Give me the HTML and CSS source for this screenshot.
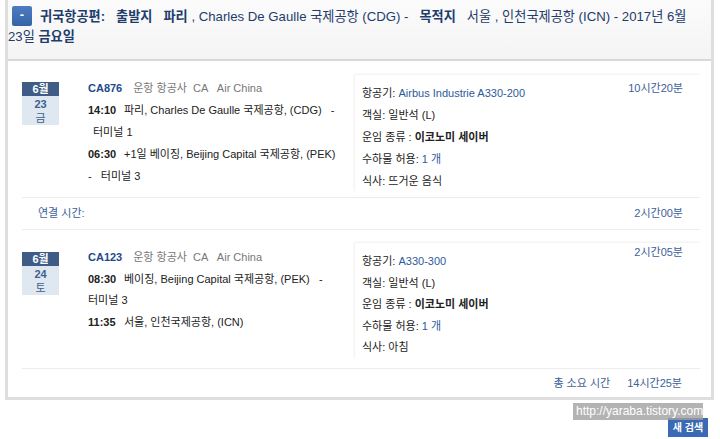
FILE: index.html
```html
<!DOCTYPE html>
<html lang="ko">
<head>
<meta charset="utf-8">
<link rel="stylesheet" href="styles.css">
</head>
<body>
<div class="panel">
  <div class="head">
    <div class="hline"><span class="toggle">-</span><b>귀국항공편:</b>&nbsp;&nbsp; <b>출발지</b>&nbsp;&nbsp; <b>파리</b> , Charles De Gaulle 국제공항 (CDG) -&nbsp;&nbsp; <b>목적지</b>&nbsp;&nbsp; 서울 , 인천국제공항 (ICN) - 2017년 6월</div>
    <div class="hline">23일 <b>금요일</b></div>
  </div>
  <div class="body">
    <div class="segment">
      <div class="left">
        <div class="date"><div class="mon">6월</div><div class="dnum">23</div><div class="dw">금</div></div>
        <div class="flight">
          <div class="row"><span class="code">CA876</span><span class="carrier">운항 항공사&nbsp; CA&nbsp;&nbsp; Air China</span></div>
          <div class="row"><span class="time">14:10</span>파리, Charles De Gaulle 국제공항, (CDG)&nbsp;&nbsp; -</div>
          <div class="row indent">터미널 1</div>
          <div class="row"><span class="time">06:30</span>+1일 베이징, Beijing Capital 국제공항, (PEK)</div>
          <div class="row">-&nbsp;&nbsp; 터미널 3</div>
        </div>
      </div>
      <div class="right">
        <div class="info">
          <div class="row">항공기: <span class="val">Airbus Industrie A330-200</span></div>
          <div class="row">객실: 일반석 (L)</div>
          <div class="row">운임 종류 : <span class="fare">이코노미 세이버</span></div>
          <div class="row">수하물 허용: <span class="val">1 개</span></div>
          <div class="row">식사: 뜨거운 음식</div>
        </div>
        <div class="dur">10시간20분</div>
      </div>
    </div>
    <div class="conn"><span>연결 시간:</span><span class="dur2">2시간00분</span></div>
    <div class="segment second">
      <div class="left">
        <div class="date"><div class="mon">6월</div><div class="dnum">24</div><div class="dw">토</div></div>
        <div class="flight">
          <div class="row"><span class="code">CA123</span><span class="carrier">운항 항공사&nbsp; CA&nbsp;&nbsp; Air China</span></div>
          <div class="row"><span class="time">08:30</span>베이징, Beijing Capital 국제공항, (PEK)&nbsp;&nbsp; -</div>
          <div class="row">터미널 3</div>
          <div class="row"><span class="time">11:35</span>서울, 인천국제공항, (ICN)</div>
        </div>
      </div>
      <div class="right">
        <div class="info">
          <div class="row">항공기: <span class="val">A330-300</span></div>
          <div class="row">객실: 일반석 (L)</div>
          <div class="row">운임 종류 : <span class="fare">이코노미 세이버</span></div>
          <div class="row">수하물 허용: <span class="val">1 개</span></div>
          <div class="row">식사: 아침</div>
        </div>
        <div class="dur">2시간05분</div>
      </div>
    </div>
    <div class="total"><span class="tl">총 소요 시간</span><span class="tv">14시간25분</span></div>
  </div>
</div>
<div class="foot">
  <span class="mark">http://yaraba.tistory.com</span>
  <span class="btn">새 검색</span>
</div>
</body>
</html>
```

FILE: styles.css
```css
* { box-sizing: border-box; }
html, body { margin: 0; padding: 0; background: #fff; }
body {
  font-family: "Liberation Sans", "Noto Sans CJK KR", sans-serif;
  font-size: 11px;
  color: #222;
  position: relative;
  width: 720px;
  height: 439px;
  overflow: hidden;
}
.panel {
  margin: 0 6px 0 5px;
  border: 3px solid #dedede;
  border-top: 0;
  height: 400px;
}
.head {
  background: linear-gradient(#fbfbfb, #f4f4f4);
  border-bottom: 2px solid #d8d8d8;
  height: 61px;
  padding-top: 7px;
  font-size: 13.2px;
  color: #1e3c6c;
}
.hline { height: 20px; line-height: 20px; white-space: nowrap; }
.head b { font-weight: bold; }
.toggle {
  display: inline-block;
  width: 20px;
  height: 20px;
  margin: -3px 8px 0 4px;
  vertical-align: middle;
  background: linear-gradient(#4d7cc0, #3563a8);
  border-radius: 2px;
  color: #fff;
  text-align: center;
  font-weight: bold;
  line-height: 18px;
  font-size: 13px;
}
.body { padding: 0 11px 0 14px; }
.segment {
  display: flex;
  padding-top: 14px;
  padding-bottom: 5px;
  border-bottom: 1px solid #ececec;
}
.segment.second { padding-top: 13px; padding-bottom: 9px; }
.left { width: 333px; display: flex; padding-top: 2px; }
.segment.second .left { padding-top: 4px; }
.date {
  width: 37px;
  height: 43px;
  margin-top: 5px;
  text-align: center;
  font-size: 11px;
  background: #dfe7f1;
  align-self: flex-start;
  color: #3f5f8e;
}
.mon { background: #3e5c86; color: #fff; height: 14px; line-height: 14px; font-weight: bold; }
.dnum { line-height: 14px; padding-top: 1px; font-weight: bold; }
.dw { line-height: 14px; }
.flight { margin-left: 29px; }
.row { line-height: 22px; height: 22px; white-space: nowrap; }
.segment.second .flight .row { height: 21.5px; line-height: 21.5px; }
.indent { padding-left: 5px; }
.code { color: #1d4a8a; font-weight: bold; margin-right: 11px; }
.carrier { color: #777; }
.time { font-weight: bold; display: inline-block; width: 36px; }
.right {
  flex: 1;
  display: flex;
  justify-content: space-between;
  padding: 7px 17px 0 7px;
  box-shadow: -1px -1px 2px rgba(0,0,0,0.07);
}
.segment.second .right { padding-top: 8px; }
.segment.second .info .row { height: 21.5px; line-height: 21.5px; }
.val { color: #2d5b9a; }
.fare { font-weight: bold; }
.dur { color: #3d6198; line-height: 22px; margin-top: -5px; }
.segment.second .dur { margin-top: -10px; }
.conn {
  display: flex;
  justify-content: space-between;
  height: 32px;
  line-height: 31px;
  padding: 0 17px 0 16px;
  border-bottom: 1px solid #ececec;
  color: #3d6198;
}
.total {
  display: flex;
  justify-content: flex-end;
  height: 28px;
  line-height: 28px;
  padding-right: 18px;
  color: #3d6198;
}
.tl { margin-right: 17px; }
.foot {
  display: flex;
  justify-content: flex-end;
  padding: 18px 12px 0 0;
}
.mark {
  position: absolute;
  left: 573px;
  top: 403px;
  width: 130px;
  height: 17px;
  line-height: 17px;
  padding-left: 3px;
  background: rgba(160,160,160,0.8);
  color: #fff;
  font-size: 12px;
  white-space: nowrap;
}
.btn {
  display: inline-block;
  width: 40px;
  height: 19px;
  line-height: 19px;
  text-align: center;
  background: #3a6ab3;
  color: #fff;
  font-weight: bold;
  font-size: 10px;
}
```
